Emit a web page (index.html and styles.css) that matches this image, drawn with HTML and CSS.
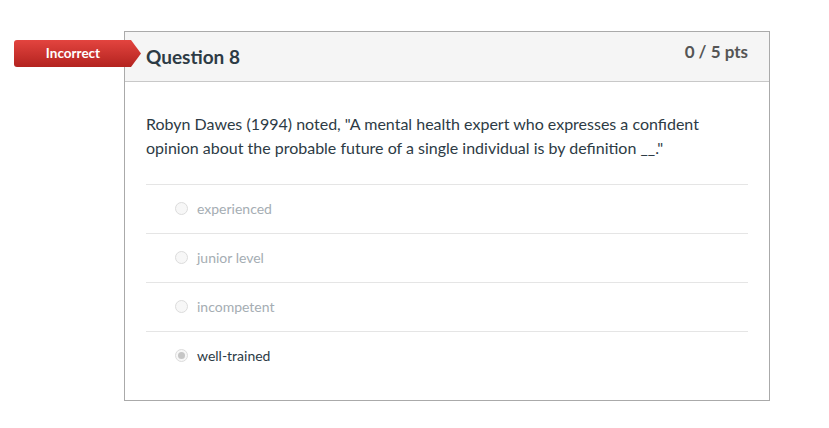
FILE: index.html
```html
<!DOCTYPE html>
<html>
<head>
<meta charset="utf-8">
<link rel="stylesheet" href="styles.css">
</head>
<body>
<div class="page">
  <div class="question">
    <div class="badge">Incorrect</div>
    <div class="q-header">
      <span class="q-title">Question 8</span>
      <span class="q-points">0 / 5 pts</span>
    </div>
    <div class="q-body">
      <p class="q-text">Robyn Dawes (1994) noted, "A mental health expert who expresses a confident opinion about the probable future of a single individual is by definition __."</p>
      <div class="answers">
        <div class="answer"><span class="radio"></span><span class="a-text">experienced</span></div>
        <div class="answer"><span class="radio"></span><span class="a-text">junior level</span></div>
        <div class="answer"><span class="radio"></span><span class="a-text">incompetent</span></div>
        <div class="answer selected"><span class="radio checked"></span><span class="a-text">well-trained</span></div>
      </div>
    </div>
  </div>
</div>
</body>
</html>
```
FILE: styles.css
```css
html, body {
  margin: 0;
  padding: 0;
  background: #fff;
  font-family: Lato, "Liberation Sans", sans-serif;
  color: #2d3b45;
}
.page {
  padding: 31px 0 0 124px;
}
.question {
  position: relative;
  width: 644px;
  border: 1px solid #aaaaaa;
  background: #fff;
}
.badge {
  position: absolute;
  left: -111px;
  top: 8px;
  width: 127px;
  height: 27px;
  box-sizing: border-box;
  padding-right: 9px;
  line-height: 26px;
  text-align: center;
  font-size: 13.5px;
  font-weight: 700;
  color: #fff;
  background: linear-gradient(#e3443f, #b3231f);
  border-radius: 3px 0 0 3px;
  clip-path: polygon(0 0, 117px 0, 100% 50%, 117px 100%, 0 100%);
}
.q-header {
  height: 50px;
  box-sizing: border-box;
  background: #f5f5f5;
  border-bottom: 1px solid #c8c8c8;
  display: flex;
  justify-content: space-between;
  align-items: flex-start;
  padding: 0 21px 0 21px;
}
.q-title {
  font-size: 19px;
  font-weight: 700;
  line-height: 24px;
  margin-top: 13px;
  color: #2d3b45;
}
.q-points {
  font-size: 17px;
  font-weight: 700;
  line-height: 20px;
  margin-top: 10px;
  color: #555555;
}
.q-body {
  padding: 30px 21px 20px 21px;
}
.q-text {
  margin: 0 0 24px 0;
  font-size: 16px;
  line-height: 24px;
  color: #2d3b45;
}
.answer {
  height: 49px;
  border-top: 1px solid #e5e5e5;
  box-sizing: border-box;
  display: flex;
  align-items: center;
  padding-left: 29px;
  padding-bottom: 2px;
}
.radio {
  width: 11px;
  height: 11px;
  border-radius: 50%;
  border: 1px solid #dcdcdc;
  background: #f7f7f7;
  margin-right: 9px;
  position: relative;
  flex: none;
}
.radio.checked::after {
  content: "";
  position: absolute;
  left: 2px;
  top: 2px;
  width: 7px;
  height: 7px;
  border-radius: 50%;
  background: #c6c6c6;
}
.a-text {
  font-size: 14px;
  color: #a5adb3;
}
.selected .a-text {
  color: #2d3b45;
}
```
